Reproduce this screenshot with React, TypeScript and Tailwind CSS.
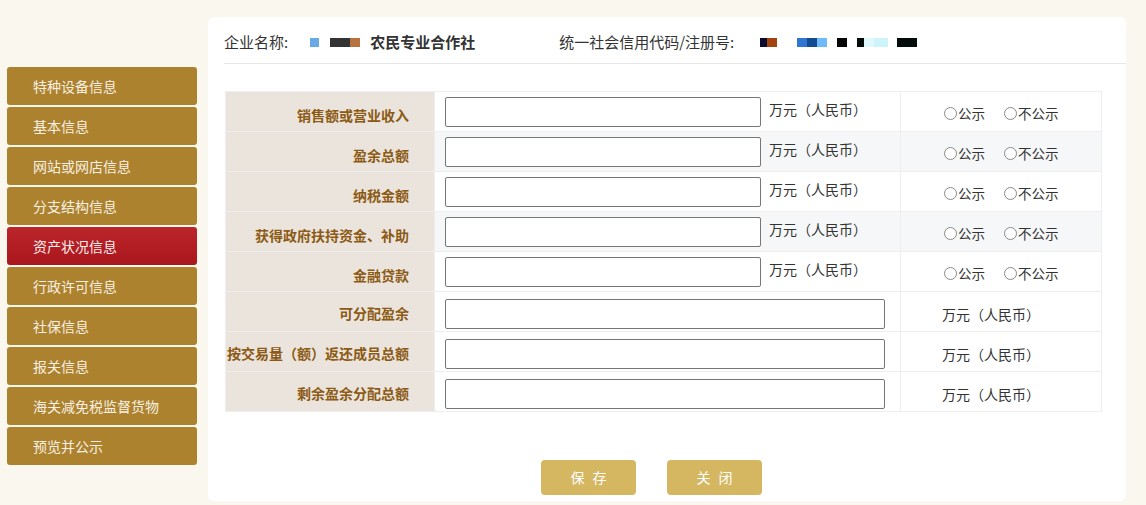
import React from 'react';

const menu = [
  '特种设备信息',
  '基本信息',
  '网站或网店信息',
  '分支结构信息',
  '资产状况信息',
  '行政许可信息',
  '社保信息',
  '报关信息',
  '海关减免税监督货物',
  '预览并公示',
];

const radioRows = [
  { label: '销售额或营业收入', gray: false },
  { label: '盈余总额', gray: true },
  { label: '纳税金额', gray: false },
  { label: '获得政府扶持资金、补助', gray: true },
  { label: '金融贷款', gray: false },
];

const wideRows = ['可分配盈余', '按交易量（额）返还成员总额', '剩余盈余分配总额'];

const Radio: React.FC<{ text: string }> = ({ text }) => (
  <span className="inline-flex items-center">
    <span className="w-[13px] h-[13px] rounded-full border border-[#8a8a8a] bg-white mr-[1px]"></span>
    <span>{text}</span>
  </span>
);

const Blot: React.FC<{ c: string; w: number }> = ({ c, w }) => (
  <span className="inline-block h-[9px]" style={{ backgroundColor: c, width: w }}></span>
);

export default function App() {
  return (
    <div
      className="w-[1146px] h-[505px] bg-[#faf7ef] flex overflow-hidden text-[#333]"
      style={{ fontFamily: '"Noto Sans CJK SC", "Noto Sans", sans-serif' }}
    >
      {/* sidebar */}
      <aside className="w-[208px] shrink-0 pl-[7px] pr-[11px] pt-[67px] flex flex-col gap-[2px]">
        {menu.map((m) => (
          <div
            key={m}
            className={
              m === '资产状况信息'
                ? 'h-[38px] rounded-[3px] bg-gradient-to-b from-[#bb252c] to-[#a9161b] text-[#fbeeee] text-[14px] flex items-center pl-[26px]'
                : 'h-[38px] rounded-[3px] bg-[#ad822e] text-[#f7f0e2] text-[14px] flex items-center pl-[26px]'
            }
          >
            {m}
          </div>
        ))}
      </aside>

      {/* main panel */}
      <main className="w-[918px] mt-[17px] h-[484px] bg-white rounded-[6px] flex flex-col">
        <div className="ml-4 h-[47px] pt-[5px] border-b border-[#e6e6e6] flex items-center text-[15px]">
          <span>企业名称:</span>
          <span className="ml-[22px] flex items-center">
            <Blot c="#68a9e6" w={9} />
            <span className="w-[11px]"></span>
            <Blot c="#333333" w={20} />
            <Blot c="#b6723f" w={10} />
          </span>
          <span className="ml-[10px] font-bold">农民专业合作社</span>
          <span className="ml-[84px]">统一社会信用代码/注册号:</span>
          <span className="ml-[26px] flex items-center">
            <Blot c="#0a0a2e" w={7} />
            <Blot c="#a3420f" w={10} />
            <span className="w-[20px]"></span>
            <Blot c="#2f76d2" w={10} />
            <Blot c="#124b92" w={10} />
            <Blot c="#6fbaf9" w={10} />
            <span className="w-[10px]"></span>
            <Blot c="#050505" w={10} />
            <span className="w-[10px]"></span>
            <Blot c="#030c0a" w={7} />
            <Blot c="#dff9fd" w={10} />
            <Blot c="#cdf3fb" w={14} />
            <span className="w-[9px]"></span>
            <Blot c="#030c0a" w={20} />
          </span>
        </div>

        <div className="pl-[17px] pt-[27px]">
          <table className="w-[876px] border-collapse table-fixed text-[14px]">
            <colgroup>
              <col className="w-[209px]" />
              <col className="w-[466px]" />
              <col className="w-[201px]" />
            </colgroup>
            <tbody>
              {radioRows.map((r) => (
                <tr key={r.label} className={r.gray ? 'h-[40px] bg-[#f6f7f9]' : 'h-[40px] bg-white'}>
                  <td className="bg-[#ebe4dd] border border-[#eeeeee] text-right pr-[25px] pt-[8px] text-[14px] font-bold text-[#8b5a14]">
                    {r.label}
                  </td>
                  <td className="border border-[#eeeeee] pl-[10px]">
                    <div className="flex items-center">
                      <input className="w-[316px] h-[30px] border border-[#767676] rounded-[2px] bg-white" />
                      <span className="ml-[8px] -mt-[4px] text-[14px] text-[#333]">万元（人民币）</span>
                    </div>
                  </td>
                  <td className="border border-[#eeeeee] pl-[43px] pt-[4px] text-[13.5px]">
                    <div className="flex items-center gap-[19px]">
                      <Radio text="公示" />
                      <Radio text="不公示" />
                    </div>
                  </td>
                </tr>
              ))}
              {wideRows.map((l) => (
                <tr key={l} className="h-[40px] bg-white">
                  <td className="bg-[#ebe4dd] border border-[#eeeeee] text-right pr-[25px] pt-[4px] text-[14px] font-bold text-[#8b5a14] whitespace-nowrap">
                    {l}
                  </td>
                  <td className="border border-[#eeeeee] pl-[10px] pt-[4px]">
                    <input className="block w-[440px] h-[30px] border border-[#767676] rounded-[2px] bg-white" />
                  </td>
                  <td className="border border-[#eeeeee] pl-[41px] pt-[6px] text-[14px]">万元（人民币）</td>
                </tr>
              ))}
            </tbody>
          </table>
        </div>

        <div className="flex justify-center gap-[31px] pr-[31px] mt-[48px]">
          <button className="w-[95px] h-[35px] rounded-[4px] bg-[#d5b762] text-white text-[14px] tracking-[8px] pl-[8px]">
            保存
          </button>
          <button className="w-[95px] h-[35px] rounded-[4px] bg-[#d5b762] text-white text-[14px] tracking-[8px] pl-[8px]">
            关闭
          </button>
        </div>
      </main>
    </div>
  );
}
